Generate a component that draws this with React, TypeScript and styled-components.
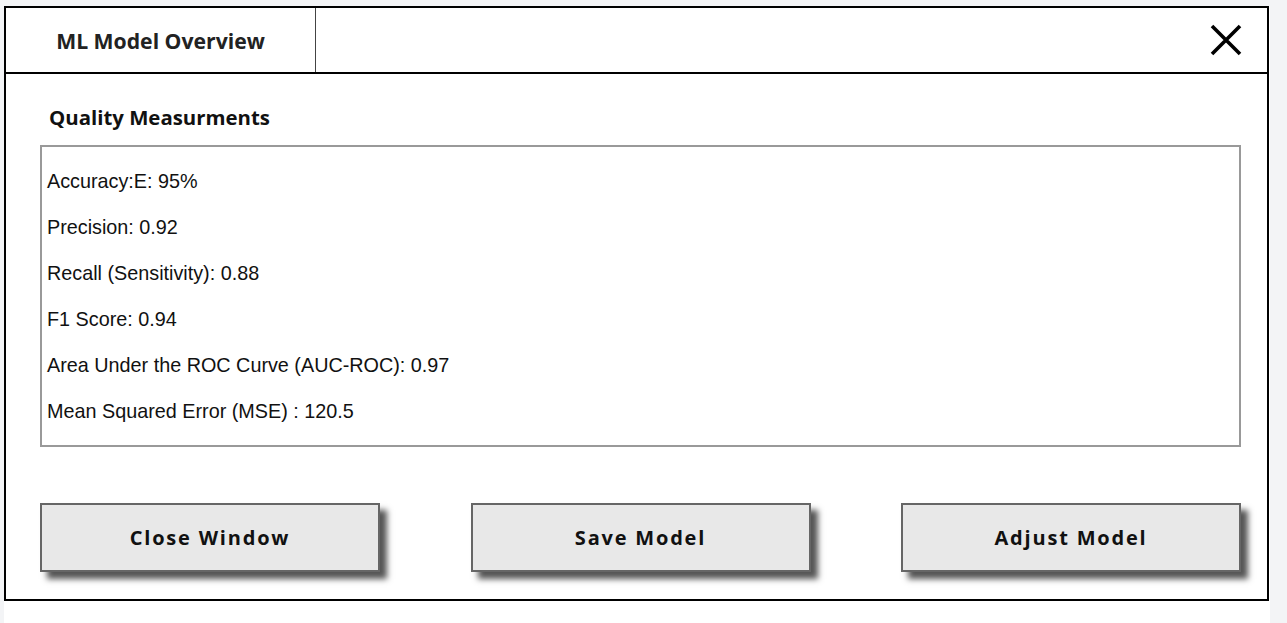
import React from 'react'
import styled, { createGlobalStyle } from 'styled-components'

const GlobalStyle = createGlobalStyle`
    body {
        margin: 0;
        background: #f3f4f6;
    }
`

const Page = styled.div`
    margin: 6px 0 0 4px;
    width: 1266px;
    min-height: 617px;
    background: #ffffff;
`

const Window = styled.div`
    box-sizing: border-box;
    width: 1265px;
    height: 595px;
    border: 2px solid #000000;
    display: flex;
    flex-direction: column;
`

const Header = styled.div`
    display: flex;
    align-items: stretch;
    height: 64px;
    border-bottom: 2px solid #000000;
`

const TitleCell = styled.div`
    width: 309px;
    border-right: 1px solid #444444;
    display: flex;
    align-items: center;
    justify-content: center;
    font-family: "Open Sans", sans-serif;
    font-weight: 700;
    font-size: 21.2px;
    color: #222222;
`

const CloseButton = styled.button`
    margin-left: auto;
    margin-right: 24px;
    background: none;
    border: none;
    padding: 0;
    display: flex;
    align-items: center;
    cursor: pointer;
`

const Body = styled.div`
    flex: 1;
    padding: 0 26px 0 34px;
    display: flex;
    flex-direction: column;
`

const SectionTitle = styled.h2`
    margin: 29px 0 0 9px;
    height: 28px;
    line-height: 28px;
    font-family: "Open Sans", sans-serif;
    font-weight: 700;
    font-size: 20.4px;
    color: #111111;
`

const MetricsBox = styled.div`
    margin-top: 14px;
    box-sizing: border-box;
    width: 1201px;
    height: 302px;
    border: 2px solid #999999;
    padding: 11px 5px;
`

const MetricRow = styled.p`
    margin: 0;
    height: 46px;
    line-height: 46px;
    font-family: "Liberation Sans", Arial, sans-serif;
    font-size: 19.8px;
    color: #111111;
`

const ButtonRow = styled.div`
    margin-top: 56px;
    width: 1201px;
    display: flex;
    justify-content: space-between;
`

const ActionButton = styled.button`
    box-sizing: border-box;
    width: 340px;
    height: 69px;
    background: #e8e8e8;
    border: 2px solid #666666;
    border-radius: 0;
    box-shadow: 7px 7px 6px #555555;
    font-family: "Open Sans", sans-serif;
    font-weight: 700;
    font-size: 20px;
    letter-spacing: 1.8px;
    color: #111111;
    cursor: pointer;
`

const metrics = [
    'Accuracy:E: 95%',
    'Precision: 0.92',
    'Recall (Sensitivity): 0.88',
    'F1 Score: 0.94',
    'Area Under the ROC Curve (AUC-ROC): 0.97',
    'Mean Squared Error (MSE) : 120.5',
]

export default function App() {
    return (
        <>
            <GlobalStyle />
            <Page>
                <Window>
                    <Header>
                        <TitleCell>ML Model Overview</TitleCell>
                        <CloseButton aria-label="Close">
                            <svg width="34" height="34" viewBox="0 0 34 34">
                                <path d="M3 3 L31 31 M31 3 L3 31" stroke="#000" strokeWidth="3.6" />
                            </svg>
                        </CloseButton>
                    </Header>
                    <Body>
                        <SectionTitle>Quality Measurments</SectionTitle>
                        <MetricsBox>
                            {metrics.map((m, i) => <MetricRow key={i}>{m}</MetricRow>)}
                        </MetricsBox>
                        <ButtonRow>
                            <ActionButton>Close Window</ActionButton>
                            <ActionButton>Save Model</ActionButton>
                            <ActionButton>Adjust Model</ActionButton>
                        </ButtonRow>
                    </Body>
                </Window>
            </Page>
        </>
    )
}
